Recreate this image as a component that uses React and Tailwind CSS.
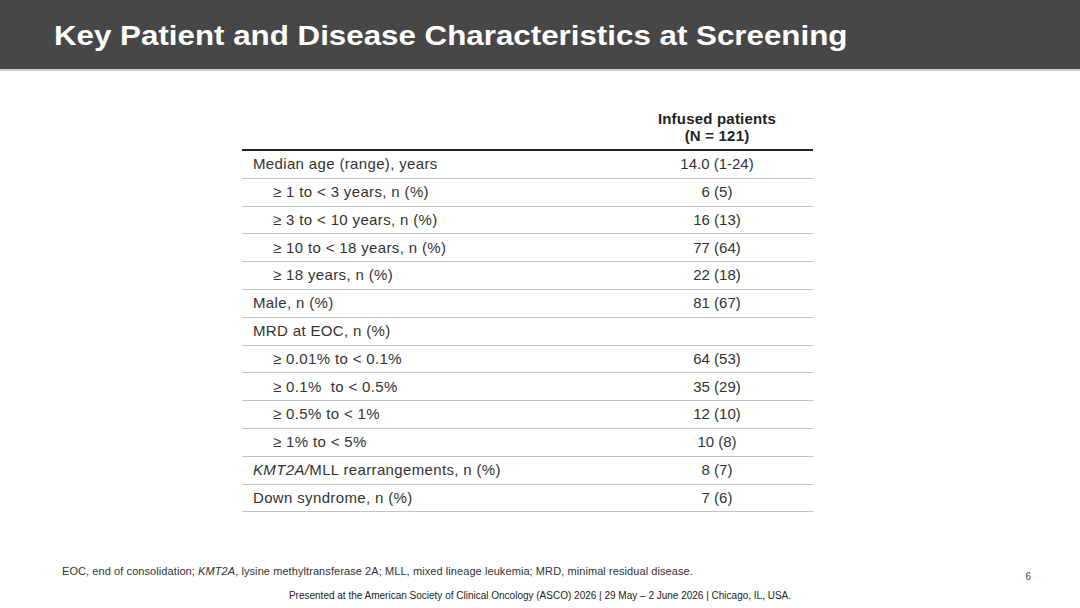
const rows = [
  { label: 'Median age (range), years', value: '14.0 (1-24)' },
  { label: '≥ 1 to < 3 years, n (%)', value: '6 (5)', sub: true },
  { label: '≥ 3 to < 10 years, n (%)', value: '16 (13)', sub: true },
  { label: '≥ 10 to < 18 years, n (%)', value: '77 (64)', sub: true },
  { label: '≥ 18 years, n (%)', value: '22 (18)', sub: true },
  { label: 'Male, n (%)', value: '81 (67)' },
  { label: 'MRD at EOC, n (%)', value: '' },
  { label: '≥ 0.01% to < 0.1%', value: '64 (53)', sub: true },
  { label: '≥ 0.1%  to < 0.5%', value: '35 (29)', sub: true },
  { label: '≥ 0.5% to < 1%', value: '12 (10)', sub: true },
  { label: '≥ 1% to < 5%', value: '10 (8)', sub: true },
  { label: 'kmt', value: '8 (7)' },
  { label: 'Down syndrome, n (%)', value: '7 (6)' },
];

export default function App() {
  return (
    <div className="w-[1080px] h-[608px] bg-white flex flex-col font-['Liberation_Sans',Arial,sans-serif] text-[#333]">
      {/* Title bar */}
      <div className="h-[71px] shrink-0 bg-[#474747] border-b-2 border-[#cfcfcf] flex items-center pl-[54px] pt-[3px]">
        <h1 className="text-[28px] font-bold text-white origin-left scale-x-[1.118] whitespace-nowrap">
          Key Patient and Disease Characteristics at Screening
        </h1>
      </div>

      {/* Table */}
      <div className="ml-[242px] w-[571px] mt-[39px]">
        <div className="flex pb-[5px]">
          <div className="flex-1" />
          <div className="w-[192px] text-center text-[15px] leading-[17px] font-bold text-[#222] tracking-[0.2px]">
            <div>Infused patients</div>
            <div>(N = 121)</div>
          </div>
        </div>
        <div className="border-t-2 border-[#222]">
          {rows.map((r, i) => (
            <div key={i} className="h-[27.8px] flex items-center border-b border-[#c4c4c4] text-[15px]">
              <div className={`flex-1 tracking-[0.35px] ${r.sub ? 'pl-[31px]' : 'pl-[11px]'}`}>
                {r.label === 'kmt' ? (
                  <span><i>KMT2A/</i>MLL rearrangements, n (%)</span>
                ) : (
                  <span className="whitespace-pre">{r.label}</span>
                )}
              </div>
              <div className="w-[192px] text-center">{r.value}</div>
            </div>
          ))}
        </div>
      </div>

      {/* Footnote */}
      <div className="mt-[53px] flex items-start pl-[62px] pr-[49px]">
        <p className="flex-1 text-[11px] leading-[13px] text-[#333] tracking-[0.08px]">
          EOC, end of consolidation; <i>KMT2A</i>, lysine methyltransferase 2A; MLL, mixed lineage leukemia; MRD, minimal residual disease.
        </p>
        <span className="text-[10px] leading-[12px] mt-[6px] text-[#444]">6</span>
      </div>
      <p className="mt-[7px] text-center text-[10px] leading-[12px] text-[#222]">
        Presented at the American Society of Clinical Oncology (ASCO) 2026 | 29 May – 2 June 2026 | Chicago, IL, USA.
      </p>
    </div>
  );
}
